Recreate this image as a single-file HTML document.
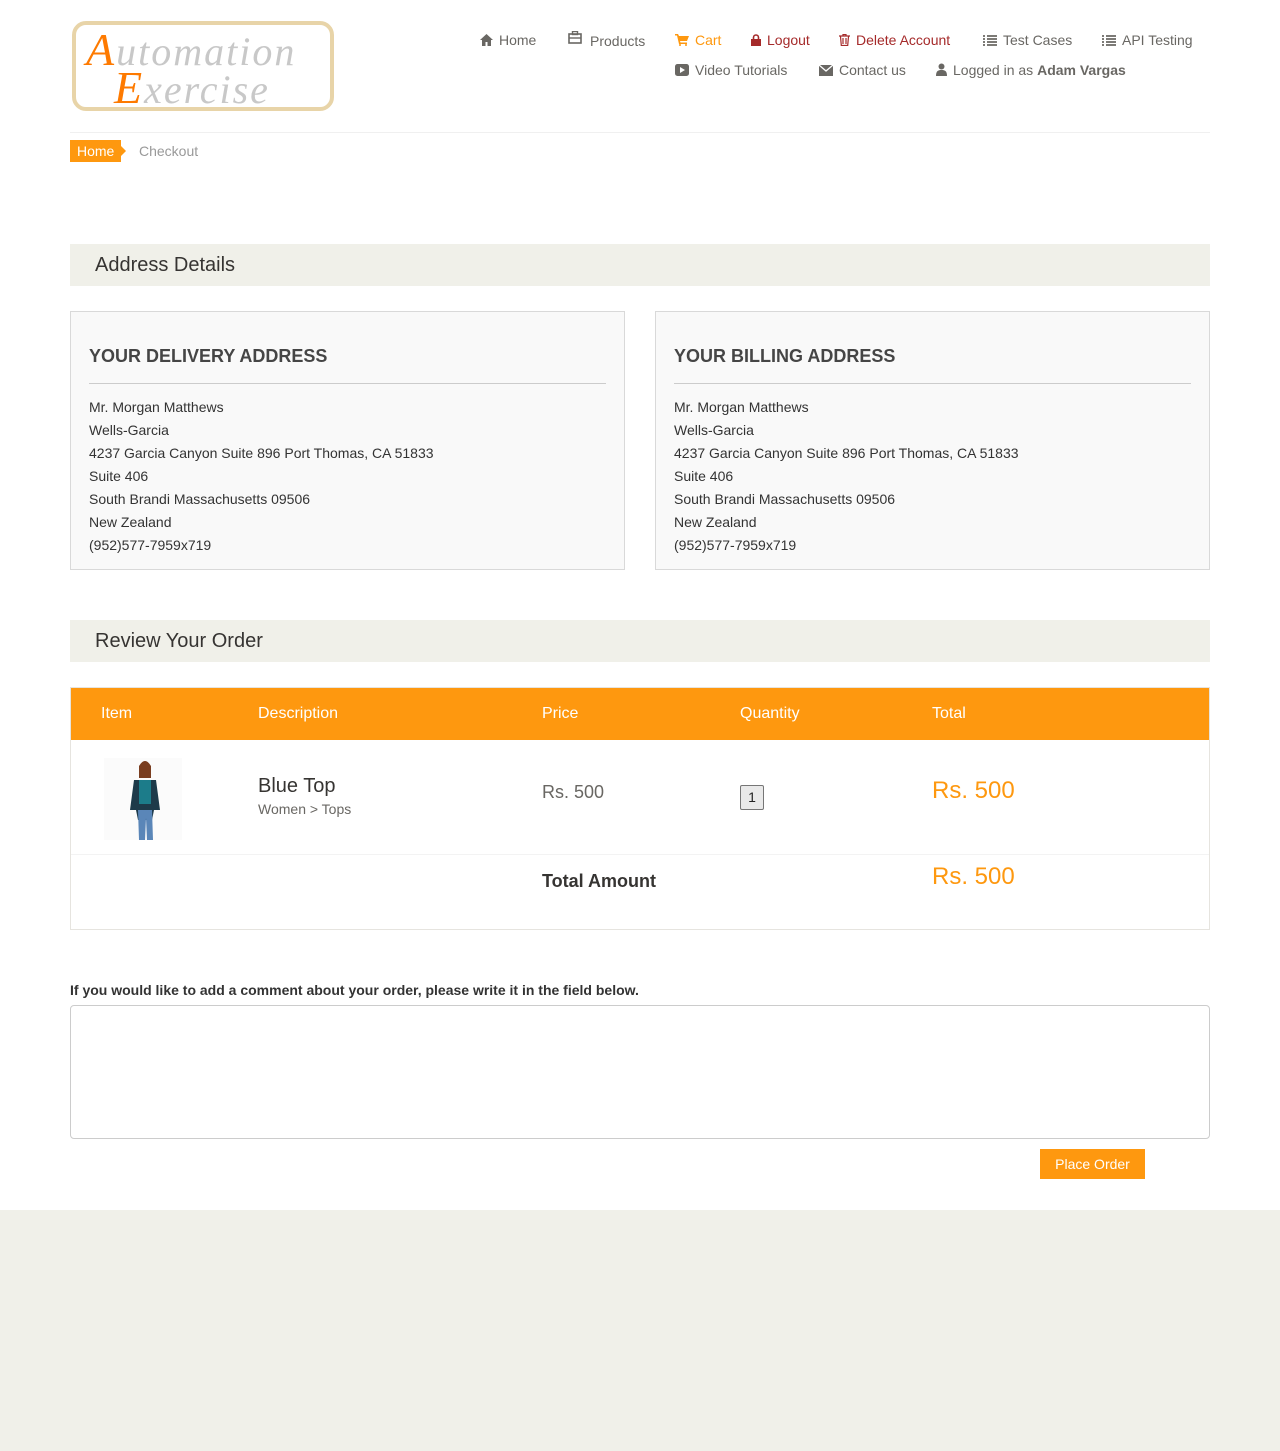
<!DOCTYPE html>
<html><head><meta charset="utf-8">
<style>
*{box-sizing:border-box;margin:0;padding:0}
body{width:1280px;height:1451px;font-family:"Liberation Sans",Arial,sans-serif;color:#696763;background:#fff;position:relative;font-size:14px}
.logo{position:absolute;left:72px;top:21px;width:262px;height:90px;border:4px solid #e8d4a8;border-radius:14px;background:#fff;font-family:"Liberation Serif",serif;font-style:italic;color:#c8c8c8;font-size:40px;letter-spacing:2px;line-height:38px}
.logo .o{color:#fe7a00;font-size:46px}
.nav{position:absolute;font-size:14px;color:#696763;white-space:nowrap}
.nav span{position:absolute;white-space:nowrap}
.ic{display:inline-block;margin-right:6px;vertical-align:-1px}
hr.top{position:absolute;left:70px;top:132px;width:1140px;border:0;border-top:1px solid #f0f0f0}
.bc{position:absolute;left:70px;top:140px;height:22px;background:#fe980f;color:#fff;font-size:14px;line-height:22px;padding:0 7px}
.bc:after{content:"";position:absolute;right:-5px;top:6px;border-left:5px solid #fe980f;border-top:5px solid transparent;border-bottom:5px solid transparent}
.bc2{position:absolute;left:139px;top:143px;color:#999;font-size:14px}
.hd{position:absolute;left:70px;width:1140px;height:42px;background:#f0f0e9;color:#363432;font-size:20px;padding-left:25px;line-height:42px}
.box{position:absolute;top:311px;width:555px;height:259px;background:#f9f9f9;border:1px solid #d9d9d9;padding:0 18px}
.box h3{font-size:18px;color:#454545;margin-top:34px;font-weight:bold;padding-bottom:16px;border-bottom:1px solid #ccc}
.box p{font-size:14px;color:#333;line-height:23px;margin-top:12px}
.tbl{position:absolute;left:70px;top:687px;width:1140px;height:243px;border:1px solid #e6e4df}
.th{height:52px;background:#fe980f;color:#fff;font-size:16px;position:relative}
.th span{position:absolute;top:17px}
.a{position:absolute}
</style></head><body>
<div class="logo"><div style="position:absolute;left:10px;top:6px"><span class="o">A</span>utomation</div><div style="position:absolute;left:38px;top:44px"><span class="o">E</span>xercise</div></div>

<div class="nav" style="left:480px;top:32px;width:740px;height:60px">
<span style="left:0"><svg class="ic" width="13" height="12" viewBox="0 0 13 12"><path d="M6.5 0L0 6h2v6h3.5V8h2v4H11V6h2z" fill="#696763"/></svg>Home</span>
<span style="left:88px;top:-2px"><svg class="ic" width="14" height="13" viewBox="0 0 14 13"><rect x="1" y="3" width="12" height="9" fill="none" stroke="#696763" stroke-width="1.6"/><rect x="4.5" y="0.5" width="5" height="3" fill="none" stroke="#696763" stroke-width="1.4"/><line x1="1" y1="7" x2="13" y2="7" stroke="#696763" stroke-width="1.4"/></svg></span>
<span style="left:110px;top:1px">Products</span>
<span style="left:195px;color:#fe980f"><svg class="ic" width="14" height="12" viewBox="0 0 14 12"><path d="M0 0h3l1 2h10l-2 5H5l.5 1.5H12V10H4L2 1.5H0z" fill="#fe980f"/><circle cx="5" cy="11" r="1" fill="#fe980f"/><circle cx="11" cy="11" r="1" fill="#fe980f"/></svg>Cart</span>
<span style="left:271px;color:#a52a2a"><svg class="ic" width="10" height="12" viewBox="0 0 10 12"><rect x="0" y="5" width="10" height="7" fill="#a52a2a"/><path d="M2.5 5V3.5a2.5 2.5 0 0 1 5 0V5" fill="none" stroke="#a52a2a" stroke-width="1.6"/></svg>Logout</span>
<span style="left:359px;color:#a52a2a"><svg class="ic" width="11" height="12" viewBox="0 0 11 12"><path d="M0 2h11M4 2V.5h3V2M1.5 2.5l.8 9h6.4l.8-9M4 4v6M7 4v6" fill="none" stroke="#a52a2a" stroke-width="1.2"/></svg>Delete Account</span>
<span style="left:503px"><svg class="ic" width="14" height="11" viewBox="0 0 14 11"><path d="M0 1h2M4 1h10M0 4h2M4 4h10M0 7h2M4 7h10M0 10h2M4 10h10" stroke="#696763" stroke-width="1.8"/></svg>Test Cases</span>
<span style="left:622px"><svg class="ic" width="14" height="11" viewBox="0 0 14 11"><path d="M0 1h2M4 1h10M0 4h2M4 4h10M0 7h2M4 7h10M0 10h2M4 10h10" stroke="#696763" stroke-width="1.8"/></svg>API Testing</span>
<span style="left:195px;top:30px"><svg class="ic" width="14" height="12" viewBox="0 0 14 12"><rect width="14" height="12" rx="2.5" fill="#696763"/><path d="M5 3l5 3-5 3z" fill="#fff"/></svg>Video Tutorials</span>
<span style="left:339px;top:30px"><svg class="ic" width="14" height="11" viewBox="0 0 14 11"><rect width="14" height="11" fill="#696763"/><path d="M0 0l7 6 7-6" fill="none" stroke="#fff" stroke-width="1.3"/></svg>Contact us</span>
<span style="left:456px;top:30px"><svg class="ic" width="11" height="13" viewBox="0 0 11 13"><circle cx="5.5" cy="3.5" r="3" fill="#696763"/><path d="M0 13c0-5 2-6 5.5-6S11 8 11 13z" fill="#696763"/></svg>Logged in as <b>Adam Vargas</b></span>
</div>

<hr class="top">
<div class="bc">Home</div><div class="bc2">Checkout</div>

<div class="hd" style="top:244px">Address Details</div>
<div class="box" style="left:70px"><h3>YOUR DELIVERY ADDRESS</h3><p>Mr. Morgan Matthews<br>Wells-Garcia<br>4237 Garcia Canyon Suite 896 Port Thomas, CA 51833<br>Suite 406<br>South Brandi Massachusetts 09506<br>New Zealand<br>(952)577-7959x719</p></div>
<div class="box" style="left:655px"><h3>YOUR BILLING ADDRESS</h3><p>Mr. Morgan Matthews<br>Wells-Garcia<br>4237 Garcia Canyon Suite 896 Port Thomas, CA 51833<br>Suite 406<br>South Brandi Massachusetts 09506<br>New Zealand<br>(952)577-7959x719</p></div>

<div class="hd" style="top:620px">Review Your Order</div>
<div class="tbl">
<div class="th"><span style="left:30px">Item</span><span style="left:187px">Description</span><span style="left:471px">Price</span><span style="left:669px">Quantity</span><span style="left:861px">Total</span></div>
<svg class="a" style="left:33px;top:70px" width="78" height="82" viewBox="0 0 78 82"><rect width="78" height="82" fill="#fbfbfb"/><circle cx="41" cy="12" r="6" fill="#d8a888"/><path d="M35 8q6-10 12 0v12h-12z" fill="#7a3e20"/><path d="M30 22h22l4 30h-6l-2 10h-14l-2-10h-6z" fill="#1d3a4a"/><rect x="35" y="22" width="12" height="24" fill="#1c7c8a"/><path d="M34 52h14l1 30h-6l-1-22-1 22h-6z" fill="#5a86b8"/></svg>
<div class="a" style="left:187px;top:87px;font-size:20px;color:#363432">Blue Top</div>
<div class="a" style="left:187px;top:113px;font-size:14px;color:#696763">Women &gt; Tops</div>
<div class="a" style="left:471px;top:94px;font-size:18px;color:#696763">Rs. 500</div>
<div class="a" style="left:669px;top:97px;width:24px;height:25px;border:1px solid #767676;border-radius:2px;background:#e9e9e9;color:#222;font-size:14px;text-align:center;line-height:23px">1</div>
<div class="a" style="left:861px;top:89px;font-size:24px;color:#fe980f">Rs. 500</div>
<div class="a" style="left:0;top:166px;width:1138px;border-top:1px solid #f3f3f3"></div>
<div class="a" style="left:471px;top:183px;font-size:18px;font-weight:bold;color:#363432">Total Amount</div>
<div class="a" style="left:861px;top:175px;font-size:24px;color:#fe980f">Rs. 500</div>
</div>

<div class="a" style="left:70px;top:982px;font-size:14px;font-weight:bold;color:#333">If you would like to add a comment about your order, please write it in the field below.</div>
<div class="a" style="left:70px;top:1005px;width:1140px;height:134px;border:1px solid #ccc;border-radius:4px"></div>
<div class="a" style="left:1040px;top:1149px;width:105px;height:30px;background:#fe980f;color:#fff;font-size:14px;text-align:center;line-height:30px">Place Order</div>

<div class="a" style="left:0;top:1210px;width:1280px;height:241px;background:#f0f0e9"></div>
</body></html>
